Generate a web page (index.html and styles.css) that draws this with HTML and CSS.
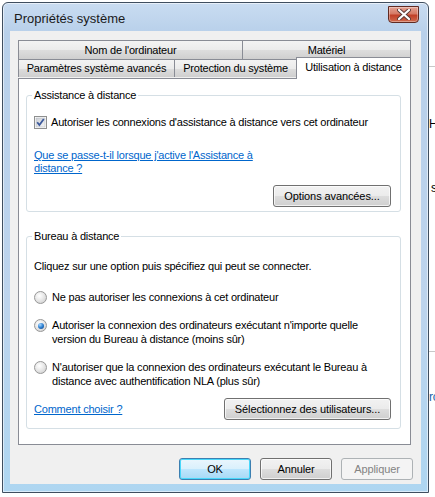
FILE: index.html
```html
<!DOCTYPE html>
<html lang="fr">
<head>
  <meta charset="UTF-8">
  <title>Propriétés système</title>
  <link rel="stylesheet" href="styles.css">
</head>
<body>
  <div class="behind">
    <span class="bg-h">H</span>
    <span class="bg-s">s</span>
    <span class="bg-ro">ro</span>
    <div class="bg-line bg-line1"></div>
    <div class="bg-line bg-line2"></div>
  </div>

  <div class="window">
    <div class="titlebar">
      <span class="title">Propriétés système</span>
      <span class="close-btn">
        <svg width="14" height="11" viewBox="0 0 14 11">
          <path d="M2 1 L12 10 M12 1 L2 10" stroke="#5a3a36" stroke-width="4" stroke-linecap="round"/>
          <path d="M2 1 L12 10 M12 1 L2 10" stroke="#ffffff" stroke-width="2.2" stroke-linecap="round"/>
        </svg>
      </span>
    </div>

    <div class="client">
      <div class="tabs">
        <div class="tab-row back">
          <div class="tab" style="width: 225px">Nom de l'ordinateur</div>
          <div class="tab" style="width: 169px">Matériel</div>
        </div>
        <div class="tab-row front">
          <div class="tab" style="width: 157px">Paramètres système avancés</div>
          <div class="tab" style="width: 123px">Protection du système</div>
          <div class="tab selected" style="width: 115px">Utilisation à distance</div>
        </div>
      </div>

      <div class="panel">
        <fieldset class="group group-assist">
          <legend>Assistance à distance</legend>
          <label class="check-row">
            <svg class="checkbox" width="13" height="13" viewBox="0 0 13 13">
              <defs>
                <linearGradient id="cbg" x1="0" y1="0" x2="1" y2="1">
                  <stop offset="0" stop-color="#cbcfd5"/>
                  <stop offset="1" stop-color="#f6f6f6"/>
                </linearGradient>
              </defs>
              <rect x="0.5" y="0.5" width="12" height="12" fill="#ffffff" stroke="#8e8f8f"/>
              <rect x="2" y="2" width="9" height="9" fill="url(#cbg)" stroke="#b8bcc2" stroke-width="0.6"/>
              <path d="M3.2 6.2 L5.4 9 L9.8 3" fill="none" stroke="#3d5a9c" stroke-width="1.8"/>
            </svg>
            <span>Autoriser les connexions d'assistance à distance vers cet ordinateur</span>
          </label>
          <a class="link link-assist" href="#">Que se passe-t-il lorsque j'active l'Assistance à distance ?</a>
          <div class="group-footer">
            <button class="btn btn-options">Options avancées...</button>
          </div>
        </fieldset>

        <fieldset class="group group-bureau">
          <legend>Bureau à distance</legend>
          <p class="intro">Cliquez sur une option puis spécifiez qui peut se connecter.</p>
          <label class="radio-row">
            <span class="radio"></span>
            <span>Ne pas autoriser les connexions à cet ordinateur</span>
          </label>
          <label class="radio-row">
            <span class="radio checked"></span>
            <span>Autoriser la connexion des ordinateurs exécutant n'importe quelle version du Bureau à distance (moins sûr)</span>
          </label>
          <label class="radio-row">
            <span class="radio"></span>
            <span>N'autoriser que la connexion des ordinateurs exécutant le Bureau à distance avec authentification NLA (plus sûr)</span>
          </label>
          <div class="group-footer split">
            <a class="link" href="#">Comment choisir ?</a>
            <button class="btn btn-users">Sélectionnez des utilisateurs...</button>
          </div>
        </fieldset>
      </div>

      <div class="dialog-buttons">
        <button class="btn btn-default">OK</button>
        <button class="btn">Annuler</button>
        <button class="btn" disabled>Appliquer</button>
      </div>
    </div>
  </div>
</body>
</html>
```

FILE: styles.css
```css
body {
  margin: 0;
  padding: 0;
  background: #ffffff;
  font-family: "Liberation Sans", Arial, sans-serif;
  font-size: 11px;
  letter-spacing: -0.2px;
  color: #000000;
  position: relative;
  height: 497px;
  overflow: hidden;
}

/* things from the window behind */
.behind {
  position: absolute;
  top: 0;
  left: 0;
  width: 435px;
  height: 497px;
}
.behind span {
  position: absolute;
  font-size: 12px;
}
.bg-h {
  left: 429px;
  top: 117px;
}
.bg-s {
  left: 431px;
  top: 181px;
}
.bg-ro {
  left: 429px;
  top: 390px;
  color: #1d5fa8;
}
.bg-line {
  position: absolute;
  left: 429px;
  width: 6px;
  height: 1px;
  background: #c8c8c8;
}
.bg-line1 {
  top: 66px;
}
.bg-line2 {
  top: 351px;
}

.window {
  position: relative;
  margin: 2px 0 0 2px;
  width: 427px;
  height: 491px;
  box-sizing: border-box;
  border: 1px solid #3f4e5f;
  border-radius: 6px 6px 0 0;
  padding: 0 7px 7px;
  background: linear-gradient(to bottom, #c9dcf1 0, #b8d0ea 30px, #bdd4ed 300px, #aed6f1 100%);
  box-shadow: inset 0 0 0 1px rgba(255, 255, 255, 0.55);
}

.titlebar {
  height: 28px;
  display: flex;
  align-items: center;
  justify-content: space-between;
  padding: 0 2px 0 4px;
}
.title {
  font-size: 13px;
  letter-spacing: 0;
  color: #1a1a1a;
  margin-top: 2px;
}
.close-btn {
  width: 29px;
  height: 15px;
  margin-top: -6px;
  border: 1px solid #5f2a22;
  border-radius: 0 0 4px 4px;
  background: linear-gradient(to bottom, #e3a394 0, #d67a65 45%, #c14028 55%, #cf6a4e 100%);
  display: flex;
  align-items: center;
  justify-content: center;
  box-shadow: inset 0 0 0 1px rgba(255, 255, 255, 0.35);
}

.client {
  background: #f0f0f0;
  height: 453px;
  padding: 9px 11px 0 8px;
  box-sizing: border-box;
}

.tabs {
  height: 38px;
}
.tab-row {
  display: flex;
  height: 19px;
}
.tab-row.front {
  height: 18px;
  position: relative;
  z-index: 1;
}
.tab {
  box-sizing: border-box;
  border: 1px solid #898c95;
  border-bottom: none;
  margin-right: -1px;
  background: linear-gradient(to bottom, #f3f3f3 0, #ebebeb 50%, #dddddd 51%, #cfcfcf 100%);
  text-align: center;
  line-height: 18px;
  height: 19px;
  white-space: nowrap;
}
.tab-row.front .tab {
  height: 18px;
  line-height: 17px;
}
.tab-row.front .tab.selected {
  background: #ffffff;
  height: 22px;
  margin-top: -2px;
  line-height: 19px;
}

.panel {
  background: #ffffff;
  border: 1px solid #898c95;
  height: 367px;
  box-sizing: border-box;
  margin-right: -1px;
  padding: 9px 9px 0 7px;
}

.group {
  margin: 0;
  border: 1px solid #d5dfe5;
  border-radius: 3px;
  padding: 0 9px 0 7px;
  min-width: 0;
}
.group legend {
  padding: 0 2px;
  margin-left: -2px;
  line-height: 14px;
}
.group-assist {
  height: 124px;
  box-sizing: border-box;
}
.group-bureau {
  margin-top: 17px;
  height: 200px;
  box-sizing: border-box;
}

.check-row {
  display: flex;
  align-items: center;
  margin-top: 13px;
  line-height: 14px;
  white-space: nowrap;
}
.checkbox {
  margin-right: 4px;
  flex: none;
}

.link {
  display: block;
  color: #0066cc;
  text-decoration: underline;
  line-height: 13px;
}
.link-assist {
  width: 235px;
  margin-top: 20px;
}

.group-footer {
  display: flex;
  justify-content: flex-end;
  margin-top: 10px;
}
.group-footer.split {
  justify-content: space-between;
  align-items: center;
  margin-top: 10px;
}

.intro {
  margin: 16px 0 0;
  line-height: 14px;
}
.radio-row {
  display: flex;
  align-items: flex-start;
  line-height: 14px;
  margin-top: 17px;
  padding-right: 8px;
}
.radio-row + .radio-row {
  margin-top: 14px;
}
.radio {
  flex: none;
  width: 11px;
  height: 11px;
  margin: 1px 5px 0 0;
  border: 1px solid #979797;
  border-radius: 50%;
  background: radial-gradient(circle at 40% 35%, #ffffff 0, #e8e8e8 45%, #c9c9c9 100%);
  position: relative;
}
.radio.checked::after {
  content: "";
  position: absolute;
  left: 2.5px;
  top: 2.5px;
  width: 6px;
  height: 6px;
  border-radius: 50%;
  background: radial-gradient(circle at 35% 30%, #a9d8ff 0, #2c7fd1 50%, #113d7c 100%);
}

.btn {
  font-family: "Liberation Sans", Arial, sans-serif;
  font-size: 11px;
  letter-spacing: -0.1px;
  color: #000000;
  height: 22px;
  padding: 0 6px;
  white-space: nowrap;
  border: 1px solid #707070;
  border-radius: 3px;
  background: linear-gradient(to bottom, #f2f2f2 0, #ebebeb 50%, #dddddd 51%, #cfcfcf 100%);
  box-shadow: inset 0 0 0 1px rgba(255, 255, 255, 0.7);
  cursor: pointer;
}
.btn-options {
  width: 118px;
}
.btn-users {
  width: 167px;
}
.btn:disabled {
  color: #838383;
  border-color: #adb2b5;
  background: #f4f4f4;
  box-shadow: none;
}

.dialog-buttons {
  display: flex;
  justify-content: flex-end;
  gap: 9px;
  margin-top: 13px;
  margin-right: -3px;
}
.dialog-buttons .btn {
  width: 72px;
}
.btn-default {
  border-color: #3c7fb1;
  background: linear-gradient(to bottom, #eaf6fd 0, #d9f0fc 50%, #bee6fd 51%, #a7d9f5 100%);
  box-shadow: inset 0 0 0 1px #48d8fb;
}
```
